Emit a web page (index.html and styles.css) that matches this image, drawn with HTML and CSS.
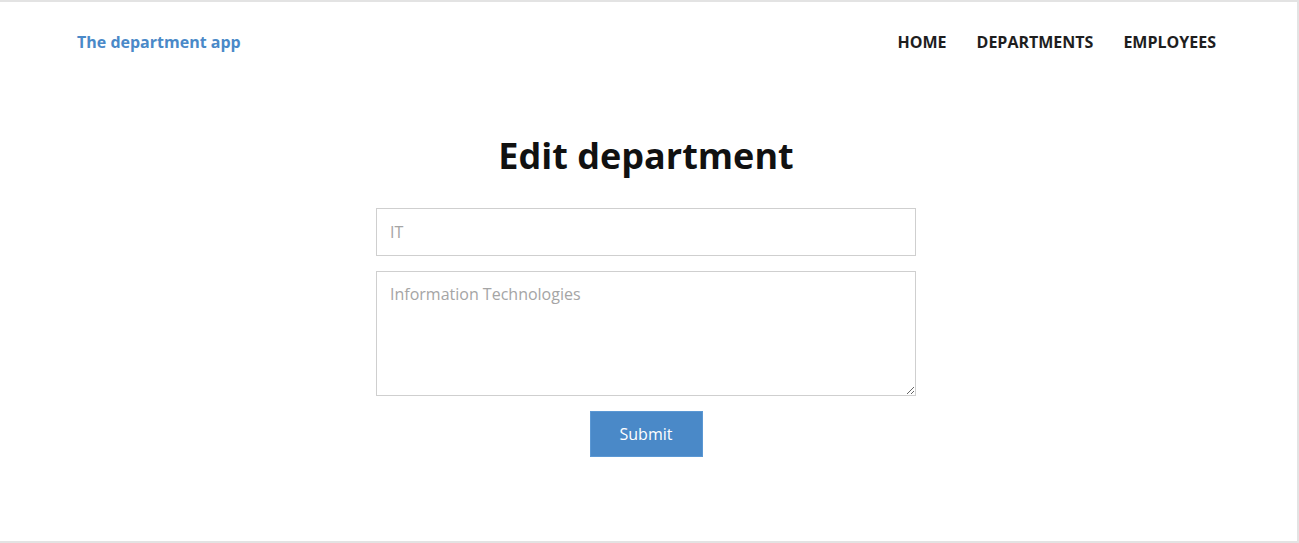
FILE: index.html
```html
<!DOCTYPE html>
<html lang="en">
<head>
<meta charset="utf-8">
<title>The department app</title>
<link rel="stylesheet" href="styles.css">
</head>
<body>
<div class="frame">
  <header class="header">
    <a class="brand" href="#">The department app</a>
    <nav class="nav">
      <a href="#">HOME</a>
      <a href="#">DEPARTMENTS</a>
      <a href="#">EMPLOYEES</a>
    </nav>
  </header>
  <main class="main">
    <h1 class="title">Edit department</h1>
    <form class="form">
      <input class="field" type="text" placeholder="IT">
      <textarea class="field area" placeholder="Information Technologies"></textarea>
      <button class="submit" type="button">Submit</button>
    </form>
  </main>
</div>
</body>
</html>
```
FILE: styles.css
```css
html, body {
  margin: 0;
  padding: 0;
  background: #fff;
}
body {
  font-family: "Open Sans", "Noto Sans", sans-serif;
  color: #111;
}
.frame {
  box-sizing: border-box;
  height: 543px;
  border-top: 2px solid #e3e3e3;
  border-right: 2px solid #e3e3e3;
  border-bottom: 2px solid #e3e3e3;
}
.header {
  display: flex;
  justify-content: space-between;
  align-items: center;
  height: 80px;
  padding: 0 81px 0 77px;
}
.brand {
  color: #4a89c8;
  font-weight: 700;
  font-size: 16px;
  text-decoration: none;
}
.nav {
  display: flex;
  gap: 30px;
}
.nav a {
  color: #1e1e1e;
  font-weight: 700;
  font-size: 16px;
  text-decoration: none;
}
.main {
  display: flex;
  flex-direction: column;
  align-items: center;
  padding-right: 5px;
}
.title {
  margin: 49px 0 27px;
  font-size: 36px;
  font-weight: 700;
  line-height: 50px;
  color: #111;
}
.form {
  display: flex;
  flex-direction: column;
  align-items: center;
  gap: 15px;
  width: 540px;
}
.field {
  box-sizing: border-box;
  width: 540px;
  height: 48px;
  border: 1px solid #cfcfcf;
  padding: 0 13px;
  font-family: "Open Sans", sans-serif;
  font-size: 16px;
  color: #333;
  outline: none;
  margin: 0;
}
.field::placeholder {
  color: #a5a5a5;
}
.area {
  height: 125px;
  padding: 11px 13px 10px;
  resize: vertical;
  display: block;
}
.submit {
  width: 113px;
  height: 46px;
  background: #4a89c8;
  border: 1px solid #5b98d4;
  color: #fff;
  font-family: "Open Sans", sans-serif;
  font-size: 16px;
  cursor: pointer;
}
```
